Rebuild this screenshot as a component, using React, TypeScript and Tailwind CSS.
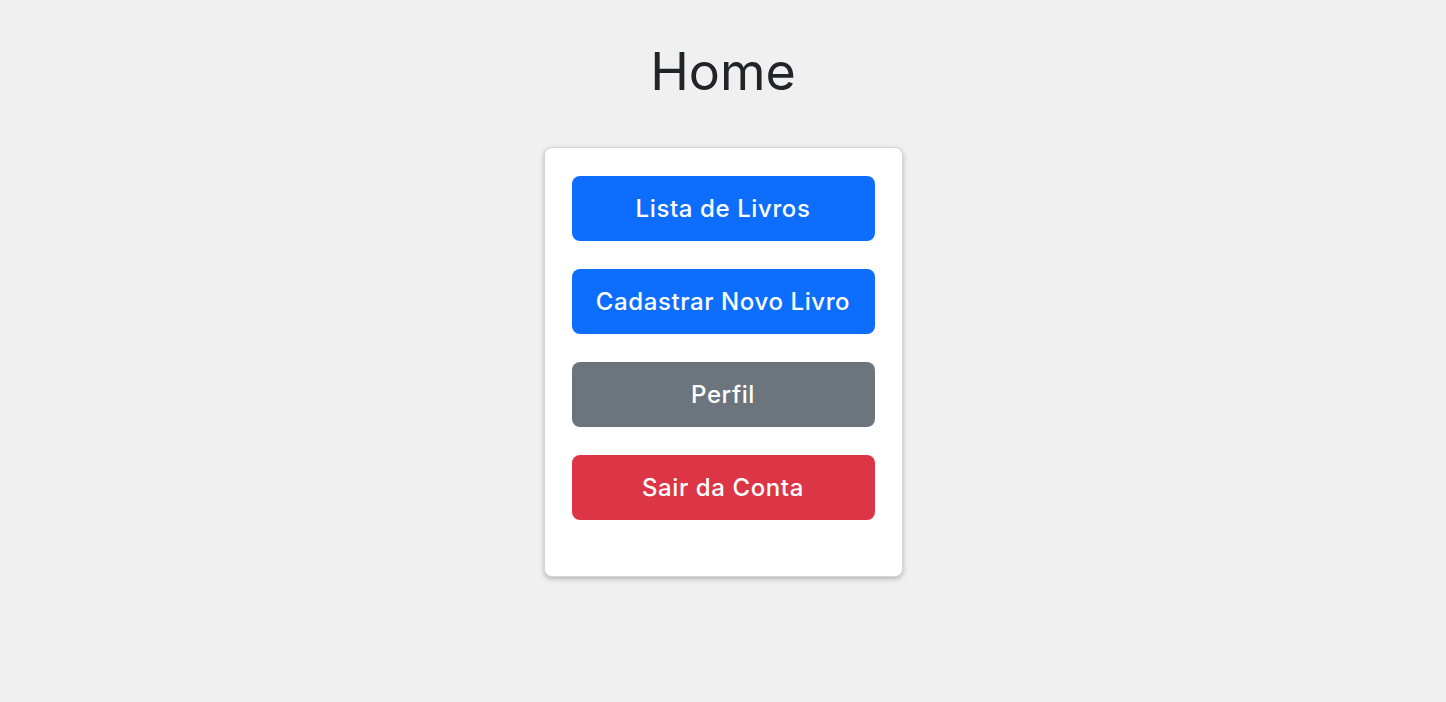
const buttons = [
  { label: "Lista de Livros", cls: "bg-[#0d6efd]" },
  { label: "Cadastrar Novo Livro", cls: "bg-[#0d6efd]" },
  { label: "Perfil", cls: "bg-[#6c757d]" },
  { label: "Sair da Conta", cls: "bg-[#dc3545]" },
];

export default function App() {
  return (
    <div className="min-h-screen bg-[#f0f0f0] font-['Inter',sans-serif] text-[#212529]">
      <div className="flex flex-col items-center pt-[36px]">
        <h1 className="text-[52px] leading-[72px] font-normal">Home</h1>

        {/* Menu card */}
        <div className="mt-[39px] w-[359px] rounded-lg border border-[#d6d6d6] bg-white px-[27px] pt-[27px] pb-[28px] shadow-[0_2px_5px_rgba(0,0,0,0.25)]">
          {buttons.map((b) => (
            <button
              key={b.label}
              className={`mb-[28px] flex h-[65px] w-full items-center justify-center rounded-lg text-[24px] font-medium tracking-[0.6px] text-white first:mt-px ${b.cls}`}
            >
              {b.label}
            </button>
          ))}
        </div>
      </div>
    </div>
  );
}
